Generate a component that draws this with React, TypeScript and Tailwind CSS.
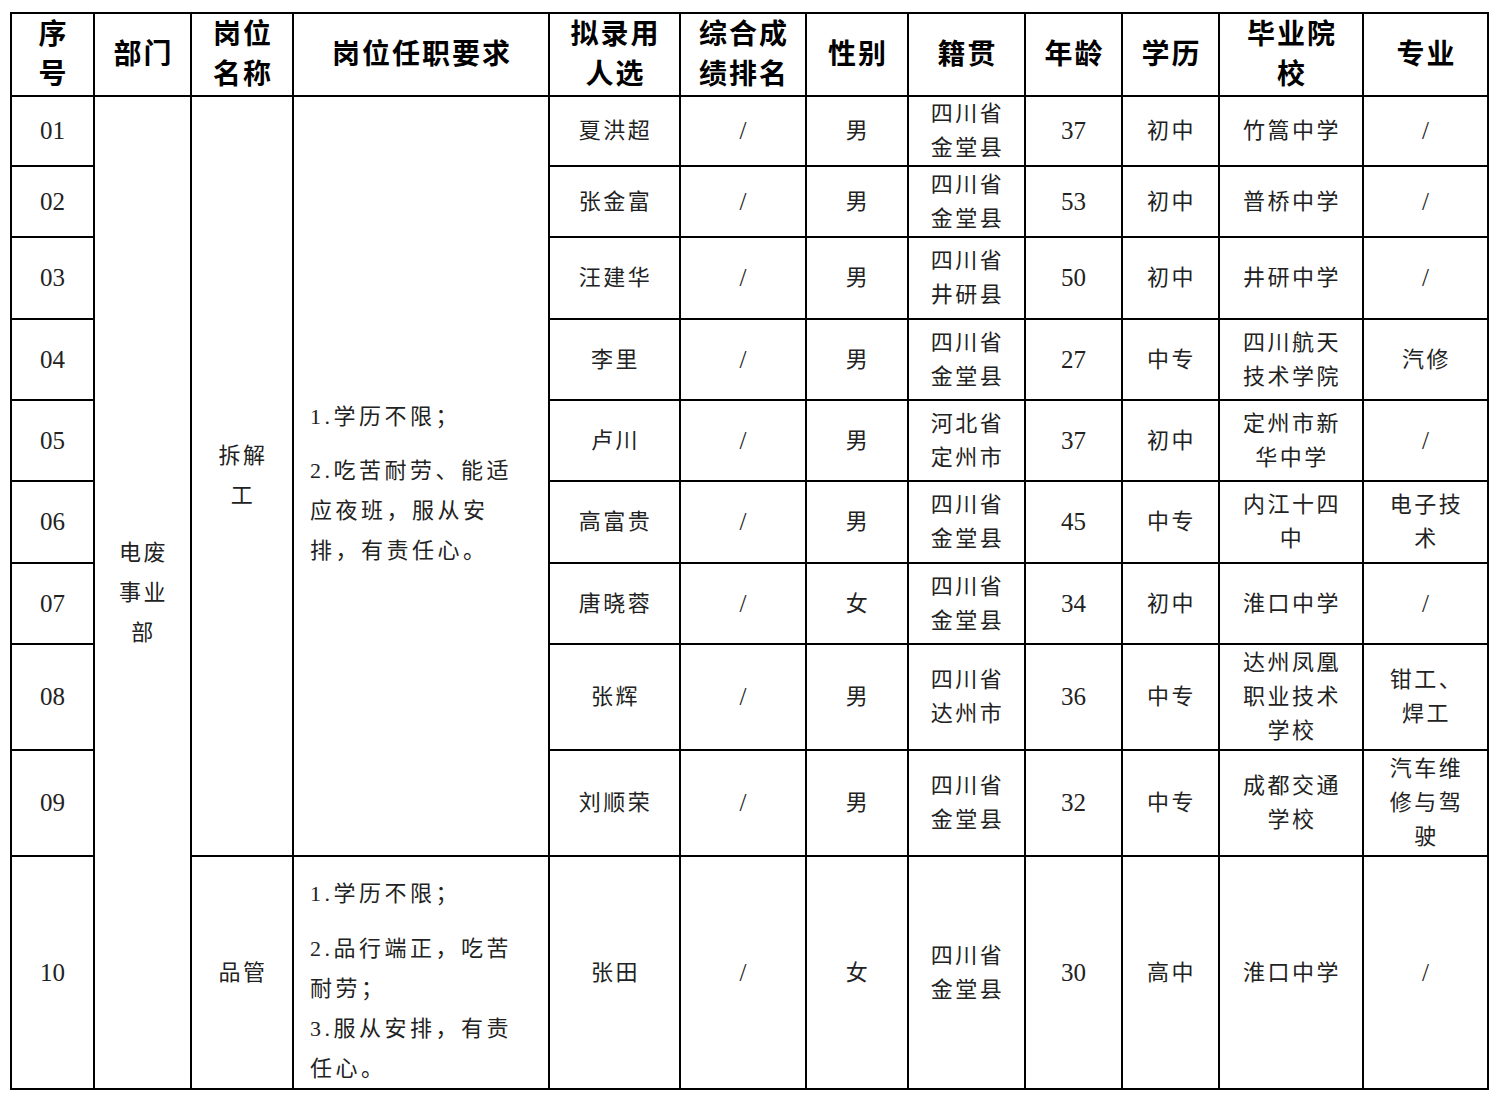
import React from 'react'

// one row per candidate; multi-line cells are split where the source document wraps them
type Row = {
  no: string
  name: string
  sex: string
  origin: string[]
  age: string
  edu: string
  school: string[]
  major: string[]
}

const ROWS: Row[] = [
  { no: '01', name: '夏洪超', sex: '男', origin: ['四川省', '金堂县'], age: '37', edu: '初中', school: ['竹篙中学'], major: ['/'] },
  { no: '02', name: '张金富', sex: '男', origin: ['四川省', '金堂县'], age: '53', edu: '初中', school: ['普桥中学'], major: ['/'] },
  { no: '03', name: '汪建华', sex: '男', origin: ['四川省', '井研县'], age: '50', edu: '初中', school: ['井研中学'], major: ['/'] },
  { no: '04', name: '李里', sex: '男', origin: ['四川省', '金堂县'], age: '27', edu: '中专', school: ['四川航天', '技术学院'], major: ['汽修'] },
  { no: '05', name: '卢川', sex: '男', origin: ['河北省', '定州市'], age: '37', edu: '初中', school: ['定州市新', '华中学'], major: ['/'] },
  { no: '06', name: '高富贵', sex: '男', origin: ['四川省', '金堂县'], age: '45', edu: '中专', school: ['内江十四', '中'], major: ['电子技', '术'] },
  { no: '07', name: '唐晓蓉', sex: '女', origin: ['四川省', '金堂县'], age: '34', edu: '初中', school: ['淮口中学'], major: ['/'] },
  { no: '08', name: '张辉', sex: '男', origin: ['四川省', '达州市'], age: '36', edu: '中专', school: ['达州凤凰', '职业技术', '学校'], major: ['钳工、', '焊工'] },
  { no: '09', name: '刘顺荣', sex: '男', origin: ['四川省', '金堂县'], age: '32', edu: '中专', school: ['成都交通', '学校'], major: ['汽车维', '修与驾', '驶'] },
  { no: '10', name: '张田', sex: '女', origin: ['四川省', '金堂县'], age: '30', edu: '高中', school: ['淮口中学'], major: ['/'] },
]

const HEADERS: string[][] = [
  ['序', '号'],
  ['部门'],
  ['岗位', '名称'],
  ['岗位任职要求'],
  ['拟录用', '人选'],
  ['综合成', '绩排名'],
  ['性别'],
  ['籍贯'],
  ['年龄'],
  ['学历'],
  ['毕业院', '校'],
  ['专业'],
]

function Lines({ lines }: { lines: string[] }) {
  return (
    <>
      {lines.map((l, i) => (
        <React.Fragment key={i}>
          {i > 0 && <br />}
          {l}
        </React.Fragment>
      ))}
    </>
  )
}

function HeadCell({ lines }: { lines: string[] }) {
  return (
    <div className="bg-white flex items-center justify-center text-center text-[28px] leading-[40px] tracking-[2px] pl-[2px] font-bold text-black">
      <div>
        <Lines lines={lines} />
      </div>
    </div>
  )
}

function Cell({ lines }: { lines: string[] }) {
  return (
    <div className="bg-white flex items-center justify-center text-center text-[22px] leading-[34px] tracking-[2.5px] pl-[2px] text-[#222]">
      <div>
        <Lines lines={lines} />
      </div>
    </div>
  )
}

function NumCell({ text }: { text: string }) {
  return (
    <div className="bg-white flex items-center justify-center text-[25px] leading-[34px] text-[#222]">
      {text}
    </div>
  )
}

export default function App() {
  return (
    <div className="min-h-[1100px] bg-white pt-[12px] pl-[10px] font-['Liberation_Serif','Noto_Sans_CJK_SC',serif]">
      <div className="grid w-fit gap-[2px] p-[2px] bg-black grid-cols-[81px_95px_100px_254px_129px_124px_100px_115px_95px_95px_142px_123px] grid-rows-[81px_68px_69px_80px_79px_79px_80px_79px_104px_104px_231px]">
        {HEADERS.map((h, i) => (
          <HeadCell key={i} lines={h} />
        ))}

        {ROWS.map((r, i) => (
          <React.Fragment key={r.no}>
            <NumCell text={r.no} />

            {i === 0 && (
              <>
                {/* department spans every data row */}
                <div className="row-span-10 bg-white flex items-center justify-center text-center text-[22px] leading-[40px] tracking-[2.5px] pl-[2px] text-[#222]">
                  <div>
                    电废
                    <br />
                    事业
                    <br />
                    部
                  </div>
                </div>
                <div className="row-span-9 bg-white flex items-center justify-center text-center text-[22px] leading-[40px] tracking-[2.5px] pl-[2px] text-[#222]">
                  <div>
                    拆解
                    <br />
                    工
                  </div>
                </div>
                <div className="row-span-9 bg-white flex flex-col justify-center pt-[16px] px-[16px] text-[22px] leading-[40px] tracking-[3.5px] text-[#222]">
                  <p>1.学历不限；</p>
                  <p className="mt-[14px]">
                    2.吃苦耐劳、能适
                    <br />
                    应夜班，服从安
                    <br />
                    排，有责任心。
                  </p>
                </div>
              </>
            )}

            {i === 9 && (
              <>
                <div className="bg-white flex items-center justify-center text-[22px] leading-[40px] tracking-[2.5px] pl-[2px] text-[#222]">
                  品管
                </div>
                <div className="bg-white flex flex-col pt-[17px] px-[16px] text-[22px] leading-[40px] tracking-[3.5px] text-[#222]">
                  <p>1.学历不限；</p>
                  <p className="mt-[15px]">
                    2.品行端正，吃苦
                    <br />
                    耐劳；
                  </p>
                  <p>
                    3.服从安排，有责
                    <br />
                    任心。
                  </p>
                </div>
              </>
            )}

            <Cell lines={[r.name]} />
            <NumCell text="/" />
            <Cell lines={[r.sex]} />
            <Cell lines={r.origin} />
            <NumCell text={r.age} />
            <Cell lines={[r.edu]} />
            <Cell lines={r.school} />
            {r.major[0] === '/' ? <NumCell text="/" /> : <Cell lines={r.major} />}
          </React.Fragment>
        ))}
      </div>
    </div>
  )
}
